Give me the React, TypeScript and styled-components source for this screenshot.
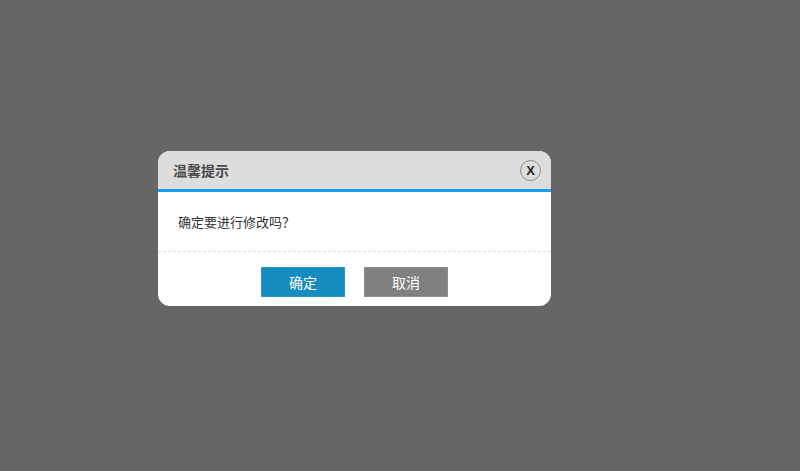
import React from "react";
import styled, { createGlobalStyle } from "styled-components";

const GlobalStyle = createGlobalStyle`
  html, body {
    margin: 0;
    padding: 0;
    height: 100%;
    background: #666666;
    font-family: "Noto Sans CJK SC", "Liberation Sans", sans-serif;
  }
  #root {
    height: 100%;
  }
`;

const Overlay = styled.div`
  box-sizing: border-box;
  width: 800px;
  height: 471px;
  padding: 151px 0 0 158px;
  background: #666666;
`;

const Dialog = styled.div`
  width: 393px;
  height: 155px;
  background: #ffffff;
  border-radius: 12px;
  overflow: hidden;
  display: flex;
  flex-direction: column;
`;

const Header = styled.div`
  height: 38px;
  background: #dddddd;
  border-bottom: 3px solid #1a9ff8;
  display: flex;
  align-items: center;
  justify-content: space-between;
  padding: 0 10px 0 15px;
`;

const Title = styled.span`
  font-size: 14px;
  font-weight: 600;
  color: #4a4a4a;
`;

const CloseButton = styled.button`
  width: 21px;
  height: 21px;
  padding: 0;
  border: 1px solid #8a8a8a;
  border-radius: 50%;
  background: transparent;
  color: #222222;
  font-family: "Liberation Sans", sans-serif;
  font-size: 13px;
  font-weight: bold;
  line-height: 19px;
  text-align: center;
  cursor: pointer;
`;

const Body = styled.div`
  height: 59px;
  display: flex;
  align-items: center;
  padding: 0 20px;
  font-family: "Noto Sans CJK SC", sans-serif;
  font-size: 13px;
  color: #333333;
  border-bottom: 1px dashed #dddddd;
`;

const Footer = styled.div`
  flex: 1;
  display: flex;
  justify-content: center;
  gap: 19px;
  padding-top: 15px;
`;

const ActionButton = styled.button<{ primary?: boolean }>`
  width: 84px;
  height: 30px;
  border: 1px solid ${(p) => (p.primary ? "#2a97c9" : "#8c8c8c")};
  background: ${(p) => (p.primary ? "#168dc0" : "#808080")};
  color: #ffffff;
  font-family: "Noto Sans CJK SC", sans-serif;
  font-size: 14px;
  cursor: pointer;
`;

const App = () => {
  return (
    <>
      <GlobalStyle />
      <Overlay>
        <Dialog>
          <Header>
            <Title>温馨提示</Title>
            <CloseButton>X</CloseButton>
          </Header>
          <Body>确定要进行修改吗？</Body>
          <Footer>
            <ActionButton primary>确定</ActionButton>
            <ActionButton>取消</ActionButton>
          </Footer>
        </Dialog>
      </Overlay>
    </>
  );
};

export default App;
